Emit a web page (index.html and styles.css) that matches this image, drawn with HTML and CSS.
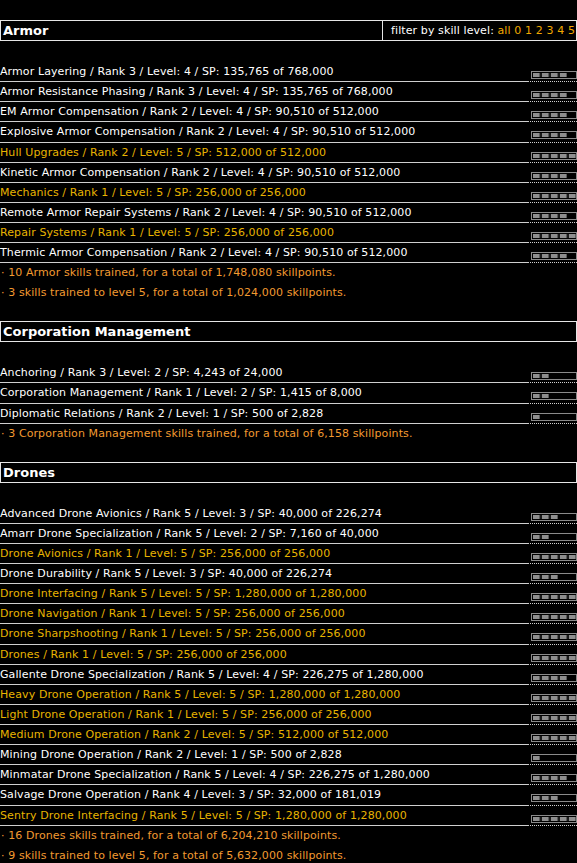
FILE: index.html
```html
<!DOCTYPE html>
<html>
<head>
<meta charset="utf-8">
<link rel="stylesheet" href="styles.css">
</head>
<body>
<div class="page">

<section class="group">
  <div class="head">
    <div class="title">Armor</div>
    <div class="filter">filter by skill level: <span class="lv">all</span> <span class="lv">0</span> <span class="lv">1</span> <span class="lv">2</span> <span class="lv">3</span> <span class="lv">4</span> <span class="lv">5</span></div>
  </div>
  <div class="rows">
    <div class="row"><div class="name">Armor Layering / Rank 3 / Level: 4 / SP: 135,765 of 768,000</div><div class="barcell"><div class="bar"><div class="fill l4"></div></div></div></div>
    <div class="row"><div class="name">Armor Resistance Phasing / Rank 3 / Level: 4 / SP: 135,765 of 768,000</div><div class="barcell"><div class="bar"><div class="fill l4"></div></div></div></div>
    <div class="row"><div class="name">EM Armor Compensation / Rank 2 / Level: 4 / SP: 90,510 of 512,000</div><div class="barcell"><div class="bar"><div class="fill l4"></div></div></div></div>
    <div class="row"><div class="name">Explosive Armor Compensation / Rank 2 / Level: 4 / SP: 90,510 of 512,000</div><div class="barcell"><div class="bar"><div class="fill l4"></div></div></div></div>
    <div class="row max"><div class="name">Hull Upgrades / Rank 2 / Level: 5 / SP: 512,000 of 512,000</div><div class="barcell"><div class="bar"><div class="fill l5"></div></div></div></div>
    <div class="row"><div class="name">Kinetic Armor Compensation / Rank 2 / Level: 4 / SP: 90,510 of 512,000</div><div class="barcell"><div class="bar"><div class="fill l4"></div></div></div></div>
    <div class="row max"><div class="name">Mechanics / Rank 1 / Level: 5 / SP: 256,000 of 256,000</div><div class="barcell"><div class="bar"><div class="fill l5"></div></div></div></div>
    <div class="row"><div class="name">Remote Armor Repair Systems / Rank 2 / Level: 4 / SP: 90,510 of 512,000</div><div class="barcell"><div class="bar"><div class="fill l4"></div></div></div></div>
    <div class="row max"><div class="name">Repair Systems / Rank 1 / Level: 5 / SP: 256,000 of 256,000</div><div class="barcell"><div class="bar"><div class="fill l5"></div></div></div></div>
    <div class="row"><div class="name">Thermic Armor Compensation / Rank 2 / Level: 4 / SP: 90,510 of 512,000</div><div class="barcell"><div class="bar"><div class="fill l4"></div></div></div></div>
  </div>
  <div class="summary">· 10 Armor skills trained, for a total of 1,748,080 skillpoints.</div>
  <div class="summary">· 3 skills trained to level 5, for a total of 1,024,000 skillpoints.</div>
</section>

<section class="group">
  <div class="head">
    <div class="title">Corporation Management</div>
  </div>
  <div class="rows">
    <div class="row"><div class="name">Anchoring / Rank 3 / Level: 2 / SP: 4,243 of 24,000</div><div class="barcell"><div class="bar"><div class="fill l2"></div></div></div></div>
    <div class="row"><div class="name">Corporation Management / Rank 1 / Level: 2 / SP: 1,415 of 8,000</div><div class="barcell"><div class="bar"><div class="fill l2"></div></div></div></div>
    <div class="row"><div class="name">Diplomatic Relations / Rank 2 / Level: 1 / SP: 500 of 2,828</div><div class="barcell"><div class="bar"><div class="fill l1"></div></div></div></div>
  </div>
  <div class="summary">· 3 Corporation Management skills trained, for a total of 6,158 skillpoints.</div>
</section>

<section class="group">
  <div class="head">
    <div class="title">Drones</div>
  </div>
  <div class="rows">
    <div class="row"><div class="name">Advanced Drone Avionics / Rank 5 / Level: 3 / SP: 40,000 of 226,274</div><div class="barcell"><div class="bar"><div class="fill l3"></div></div></div></div>
    <div class="row"><div class="name">Amarr Drone Specialization / Rank 5 / Level: 2 / SP: 7,160 of 40,000</div><div class="barcell"><div class="bar"><div class="fill l2"></div></div></div></div>
    <div class="row max"><div class="name">Drone Avionics / Rank 1 / Level: 5 / SP: 256,000 of 256,000</div><div class="barcell"><div class="bar"><div class="fill l5"></div></div></div></div>
    <div class="row"><div class="name">Drone Durability / Rank 5 / Level: 3 / SP: 40,000 of 226,274</div><div class="barcell"><div class="bar"><div class="fill l3"></div></div></div></div>
    <div class="row max"><div class="name">Drone Interfacing / Rank 5 / Level: 5 / SP: 1,280,000 of 1,280,000</div><div class="barcell"><div class="bar"><div class="fill l5"></div></div></div></div>
    <div class="row max"><div class="name">Drone Navigation / Rank 1 / Level: 5 / SP: 256,000 of 256,000</div><div class="barcell"><div class="bar"><div class="fill l5"></div></div></div></div>
    <div class="row max"><div class="name">Drone Sharpshooting / Rank 1 / Level: 5 / SP: 256,000 of 256,000</div><div class="barcell"><div class="bar"><div class="fill l5"></div></div></div></div>
    <div class="row max"><div class="name">Drones / Rank 1 / Level: 5 / SP: 256,000 of 256,000</div><div class="barcell"><div class="bar"><div class="fill l5"></div></div></div></div>
    <div class="row"><div class="name">Gallente Drone Specialization / Rank 5 / Level: 4 / SP: 226,275 of 1,280,000</div><div class="barcell"><div class="bar"><div class="fill l4"></div></div></div></div>
    <div class="row max"><div class="name">Heavy Drone Operation / Rank 5 / Level: 5 / SP: 1,280,000 of 1,280,000</div><div class="barcell"><div class="bar"><div class="fill l5"></div></div></div></div>
    <div class="row max"><div class="name">Light Drone Operation / Rank 1 / Level: 5 / SP: 256,000 of 256,000</div><div class="barcell"><div class="bar"><div class="fill l5"></div></div></div></div>
    <div class="row max"><div class="name">Medium Drone Operation / Rank 2 / Level: 5 / SP: 512,000 of 512,000</div><div class="barcell"><div class="bar"><div class="fill l5"></div></div></div></div>
    <div class="row"><div class="name">Mining Drone Operation / Rank 2 / Level: 1 / SP: 500 of 2,828</div><div class="barcell"><div class="bar"><div class="fill l1"></div></div></div></div>
    <div class="row"><div class="name">Minmatar Drone Specialization / Rank 5 / Level: 4 / SP: 226,275 of 1,280,000</div><div class="barcell"><div class="bar"><div class="fill l4"></div></div></div></div>
    <div class="row"><div class="name">Salvage Drone Operation / Rank 4 / Level: 3 / SP: 32,000 of 181,019</div><div class="barcell"><div class="bar"><div class="fill l3"></div></div></div></div>
    <div class="row max"><div class="name">Sentry Drone Interfacing / Rank 5 / Level: 5 / SP: 1,280,000 of 1,280,000</div><div class="barcell"><div class="bar"><div class="fill l5"></div></div></div></div>
  </div>
  <div class="summary">· 16 Drones skills trained, for a total of 6,204,210 skillpoints.</div>
  <div class="summary">· 9 skills trained to level 5, for a total of 5,632,000 skillpoints.</div>
</section>

</div>
</body>
</html>
```

FILE: styles.css
```css
html, body {
  margin: 0;
  padding: 0;
  background: #000;
}

.page {
  padding-top: 20px;
  font-family: "DejaVu Sans", sans-serif;
  font-size: 11px;
  letter-spacing: 0.1px;
  color: #ffffff;
}

.group {
  margin-bottom: 18px;
}

.head {
  display: flex;
  align-items: stretch;
  height: 19px;
  border: 1px solid #e6e6e6;
  margin-bottom: 21px;
}

.title {
  flex: 1;
  padding-left: 2px;
  font-weight: bold;
  font-size: 13px;
  letter-spacing: 0;
  line-height: 19px;
  color: #ffffff;
}

.filter {
  border-left: 1px solid #e6e6e6;
  padding: 0 1px 0 8px;
  line-height: 19px;
  white-space: nowrap;
}

.filter .lv {
  color: #f0a800;
}

.row {
  display: flex;
  height: 20.14px;
}

.name {
  flex: 1;
  line-height: 19px;
  border-bottom: 1px solid #cfcfcf;
  white-space: nowrap;
  overflow: hidden;
}

.row.max .name {
  color: #e8b400;
}

.barcell {
  width: 49px;
  border-bottom: 1px dotted #cfcfcf;
  display: flex;
  justify-content: flex-end;
  align-items: flex-start;
  padding-top: 9px;
  box-sizing: border-box;
}

.bar {
  width: 46px;
  height: 8px;
  box-sizing: border-box;
  border: 1px solid #8a8a8a;
  padding: 1px;
  background: #000;
}

.fill {
  height: 4px;
  background: repeating-linear-gradient(to right, #8e8e8e 0, #8e8e8e 6px, #5a5a5a 6px, #5a5a5a 7px, #1a1a1a 7px, #1a1a1a 9px);
}

.l1 { width: 7px; }
.l2 { width: 16px; }
.l3 { width: 25px; }
.l4 { width: 34px; }
.l5 { width: 43px; }

.summary {
  height: 20px;
  line-height: 20px;
  color: #f29a30;
  padding-left: 1px;
  white-space: nowrap;
}
```
